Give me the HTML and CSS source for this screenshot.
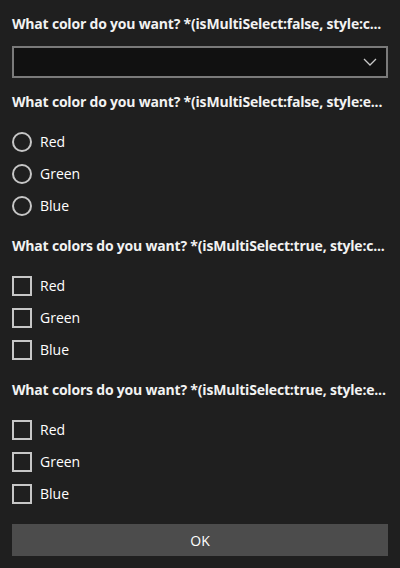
FILE: index.html
```html
<!DOCTYPE html>
<html>
<head>
<meta charset="utf-8">
<link rel="stylesheet" href="styles.css">
</head>
<body>
<div class="form">
  <div class="heading">What color do you want? *(isMultiSelect:false, style:c...</div>
  <div class="dropdown">
    <svg class="chev" width="14" height="8" viewBox="0 0 14 8"><path d="M1 1 L7 7 L13 1" fill="none" stroke="#c8c8c8" stroke-width="1.3"/></svg>
  </div>
  <div class="heading">What color do you want? *(isMultiSelect:false, style:e...</div>
  <div class="options">
    <div class="opt"><span class="radio"></span><span class="label">Red</span></div>
    <div class="opt"><span class="radio"></span><span class="label">Green</span></div>
    <div class="opt"><span class="radio"></span><span class="label">Blue</span></div>
  </div>
  <div class="heading">What colors do you want? *(isMultiSelect:true, style:c...</div>
  <div class="options">
    <div class="opt"><span class="check"></span><span class="label">Red</span></div>
    <div class="opt"><span class="check"></span><span class="label">Green</span></div>
    <div class="opt"><span class="check"></span><span class="label">Blue</span></div>
  </div>
  <div class="heading">What colors do you want? *(isMultiSelect:true, style:e...</div>
  <div class="options">
    <div class="opt"><span class="check"></span><span class="label">Red</span></div>
    <div class="opt"><span class="check"></span><span class="label">Green</span></div>
    <div class="opt"><span class="check"></span><span class="label">Blue</span></div>
  </div>
  <div class="button">OK</div>
</div>
</body>
</html>
```
FILE: styles.css
```css
html, body {
  margin: 0;
  padding: 0;
  background: #1f1f1f;
}
body {
  width: 400px;
  height: 568px;
  overflow: hidden;
  font-family: "Open Sans", "Noto Sans", sans-serif;
  color: #ffffff;
}
.form {
  display: flex;
  flex-direction: column;
  padding: 14px 12px 0 12px;
  gap: 14px;
}
.heading {
  font-size: 14px;
  font-weight: 700;
  line-height: 20px;
  height: 20px;
  white-space: nowrap;
  color: #f2f2f2;
  letter-spacing: -0.2px;
}
.dropdown {
  margin-top: -2px;
  height: 32px;
  box-sizing: border-box;
  border: 2px solid #7a7a7a;
  background: #111111;
  display: flex;
  align-items: center;
  justify-content: flex-end;
  padding-right: 9px;
}
.options {
  display: flex;
  flex-direction: column;
}
.opt {
  height: 32px;
  display: flex;
  align-items: center;
  gap: 8px;
}
.radio {
  width: 20px;
  height: 20px;
  box-sizing: border-box;
  border: 2px solid #c6c6c6;
  border-radius: 50%;
}
.check {
  width: 20px;
  height: 20px;
  box-sizing: border-box;
  border: 2px solid #c6c6c6;
}
.label {
  font-size: 14px;
  color: #ffffff;
  line-height: 20px;
}
.button {
  height: 32px;
  background: #4c4c4c;
  display: flex;
  align-items: center;
  justify-content: center;
  font-size: 14px;
  color: #ffffff;
}
```
